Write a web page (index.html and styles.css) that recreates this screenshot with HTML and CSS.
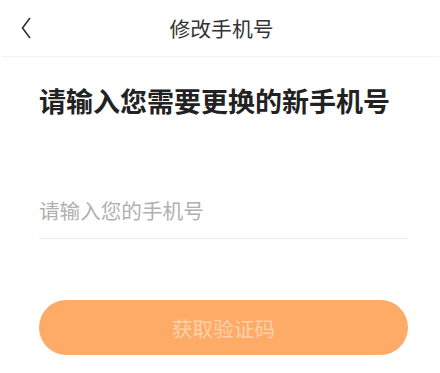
FILE: index.html
```html
<!DOCTYPE html>
<html lang="zh">
<head>
<meta charset="utf-8">
<link rel="stylesheet" href="styles.css">
</head>
<body>
<div class="page">
  <header class="nav">
    <button class="back" aria-label="返回">
      <svg width="10" height="22" viewBox="0 0 10 22"><path d="M9 1 L1.5 11 L9 21" fill="none" stroke="#333" stroke-width="1.6" stroke-linejoin="miter"/></svg>
    </button>
    <div class="title">修改手机号</div>
  </header>
  <main class="content">
    <h1 class="heading">请输入您需要更换的新手机号</h1>
    <div class="field">
      <input class="input" type="tel" placeholder="请输入您的手机号">
    </div>
    <button class="submit" disabled>获取验证码</button>
  </main>
</div>
</body>
</html>
```
FILE: styles.css
```css
* { box-sizing: border-box; }
html, body { margin: 0; padding: 0; background: #fff; }
body {
  font-family: "Noto Sans CJK SC", "Noto Sans", sans-serif;
  color: #333;
}
.page { width: 440px; }
.nav {
  position: relative;
  height: 57px;
  display: flex;
  align-items: center;
  justify-content: center;
  border-bottom: 1px solid #f2f2f2;
  margin: 0 1px 0 2px;
}
.back {
  position: absolute;
  left: 19px;
  top: 17px;
  padding: 0;
  border: 0;
  background: none;
  display: flex;
}
.title {
  font-size: 20.8px;
  color: #333;
  line-height: 1;
  padding-left: 2px;
}
.content {
  padding: 0 32px 0 39px;
  display: flex;
  flex-direction: column;
}
.heading {
  margin: 26px 0 0;
  font-size: 27px;
  font-weight: 700;
  color: #222;
  line-height: 36px;
  letter-spacing: 0;
}
.field {
  margin-top: 62px;
  border-bottom: 1px solid #ebebeb;
  height: 58px;
  display: flex;
  align-items: center;
}
.input {
  border: 0;
  outline: none;
  width: 100%;
  padding: 0;
  font-family: inherit;
  font-size: 20.6px;
  color: #333;
  background: transparent;
}
.input::placeholder { color: #b0b0b0; }
.submit {
  margin-top: 61px;
  height: 55px;
  border: 0;
  border-radius: 28px;
  background: #fdab67;
  color: #fed1ab;
  font-family: inherit;
  font-size: 20.6px;
  padding: 0;
}
```
